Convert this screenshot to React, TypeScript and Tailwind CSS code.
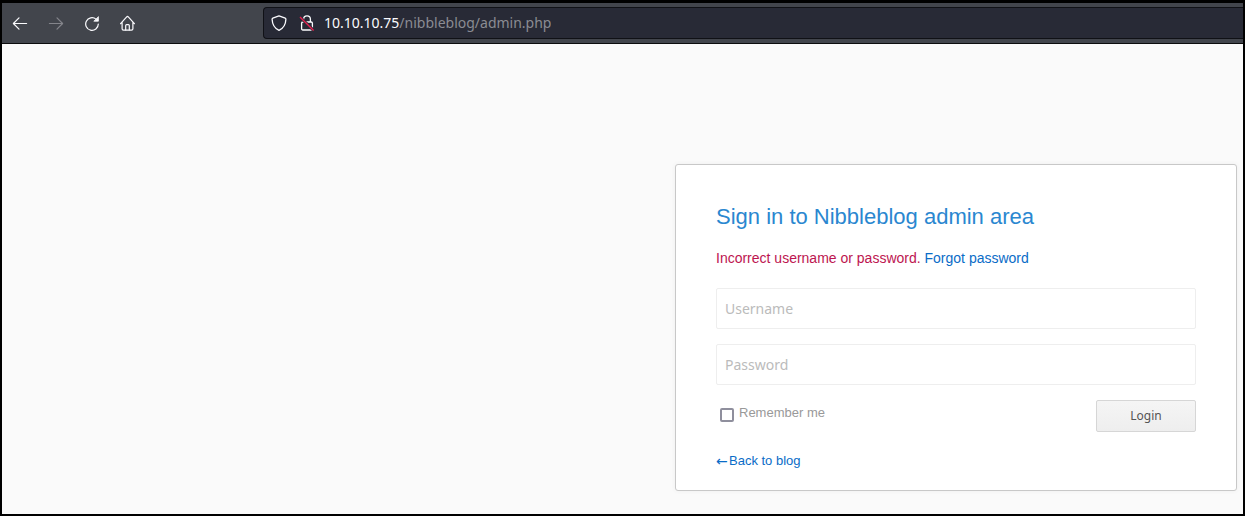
import React from "react";

function NavButton({
  label,
  disabled,
  children,
}: {
  label: string;
  disabled?: boolean;
  children: React.ReactNode;
}) {
  return (
    <button
      type="button"
      aria-label={label}
      disabled={disabled}
      className="flex size-5 items-center justify-center text-[#fbfbfe] disabled:text-[#84858b]"
    >
      <svg
        viewBox="0 0 16 16"
        className="size-4"
        fill="none"
        stroke="currentColor"
        strokeWidth="1.2"
        strokeLinecap="round"
        strokeLinejoin="round"
        aria-hidden="true"
      >
        {children}
      </svg>
    </button>
  );
}

function Toolbar() {
  return (
    <header className="flex items-center border-b border-[#0c0c0d] bg-[#42454c] py-1 pl-2">
      <nav className="flex w-[253px] shrink-0 gap-4">
        <NavButton label="Back">
          <path d="M14.6 8.500H1.400M7 2.900 1.400 8.500 7 14.100" />
        </NavButton>
        <NavButton label="Forward" disabled>
          <path d="M1.400 8.500h13.200M9 2.900 14.600 8.500 9 14.100" />
        </NavButton>
        <NavButton label="Reload">
          <path d="M12 4.100A6.300 6.300 0 1 0 14.300 9" />
          <path d="M14.400 2v4.200H10.200z" fill="currentColor" strokeWidth="0.8" />
        </NavButton>
        <NavButton label="Home">
          <path d="M.6 8.700 6.700 1.900q.8-.8 1.600 0L14.400 8.700M2.100 7.100v6.600q0 1.400 1.400 1.400h8q1.400 0 1.400-1.400V7.100" />
          <path d="M5.700 14.900V10.500q0-.9.9-.9h1.800q.9 0 .9.900v4.400" />
        </NavButton>
      </nav>
      <div className="flex min-w-0 flex-1 items-center rounded-l-sm border border-r-0 border-[#101116] bg-[#282a36] pl-[7px]">
        <svg
          viewBox="0 0 16 16"
          className="size-4 shrink-0"
          fill="none"
          stroke="#fbfbfe"
          strokeWidth="1.3"
          strokeLinejoin="round"
          aria-hidden="true"
        >
          <path d="M8 .9 1.8 3.2q-.7.3-.7 1C1.3 9.4 3.6 13.300 8 15.300c4.400-2 6.700-5.900 6.900-11.100q0-.7-.7-1z" />
        </svg>
        <svg
          viewBox="0 0 16 16"
          className="ml-3 size-4 shrink-0"
          fill="none"
          stroke="#fbfbfe"
          strokeWidth="1.3"
          aria-hidden="true"
        >
          <rect x="2.600" y="7" width="10.800" height="8" rx="1.200" />
          <path d="M4.600 7V4.300a3.400 3.400 0 0 1 6.800 0V7" />
          <path d="M1.200 2.200 14.600 15.400" stroke="#282a36" strokeWidth="3" />
          <path d="M1 2 14.600 15.400" stroke="#e2214f" strokeWidth="1.400" />
        </svg>
        <p className="ml-[9px] truncate font-['Noto_Sans',sans-serif] text-[14px] leading-[30px] text-[#8b8c93]">
          <span className="text-[#fbfbfe]">10.10.10.75</span>/nibbleblog/admin.php
        </p>
      </div>
    </header>
  );
}

const fieldClass =
  "block h-[41px] w-full rounded-[2px] border border-[#eeeeee] bg-white px-2 font-['Noto_Sans',sans-serif] text-[14px] text-[#333333] placeholder:text-[#bbbbbb] placeholder:opacity-100";

function LoginCard() {
  return (
    <form
      onSubmit={(event) => event.preventDefault()}
      className="w-full rounded-[3px] border border-[#c8c8c8] bg-white px-10 pt-10 pb-[19px] shadow-[0_0_4px_#eeeeee]"
    >
      <h1 className="text-[22px] leading-6 text-[#2a87d0]">
        Sign in to Nibbleblog admin area
      </h1>
      <p className="mt-[19px] text-sm leading-5 text-[#bd1550]">
        Incorrect username or password.{" "}
        <a href="#forgot" className="text-[#0a6cc7]">
          Forgot password
        </a>
      </p>
      <div className="mt-5 flex flex-col gap-[15px]">
        <input type="text" aria-label="Username" placeholder="Username" className={fieldClass} />
        <input type="password" aria-label="Password" placeholder="Password" className={fieldClass} />
        <div className="flex items-start justify-between">
          <div className="flex pl-1">
            <input
              id="remember"
              type="checkbox"
              className="mt-2 size-[14px] appearance-none rounded-[2px] border-2 border-[#8f8f9d] bg-white checked:bg-[#0a6cc7]"
            />
            <label htmlFor="remember" className="pt-[3px] pl-[5px] text-[13px] leading-5 text-[#999999]">
              Remember me
            </label>
          </div>
          <button
            type="submit"
            className="h-8 w-[100px] rounded-[2px] border border-[#d6d6d6] bg-linear-to-b from-[#f5f5f5] to-[#eeeeee] font-['Noto_Sans',sans-serif] text-[12px] text-[#555555]"
          >
            Login
          </button>
        </div>
      </div>
      <a href="#blog" className="mt-[19px] flex w-fit items-center text-[13px] leading-5 text-[#0a6cc7]">
        <span aria-hidden="true" className="w-[13px] font-['DejaVu_Sans',sans-serif] text-[14px]">
          ←
        </span>
        Back to blog
      </a>
    </form>
  );
}

export default function App() {
  return (
    <div className="flex min-h-screen flex-col border-2 border-t-3 border-black bg-[#fafafa] font-['Liberation_Sans',Arial,sans-serif]">
      <Toolbar />
      <main className="flex flex-1 justify-end px-1.5 pt-[120px] pb-5">
        <div className="w-full max-w-[562px]">
          <LoginCard />
        </div>
      </main>
    </div>
  );
}
